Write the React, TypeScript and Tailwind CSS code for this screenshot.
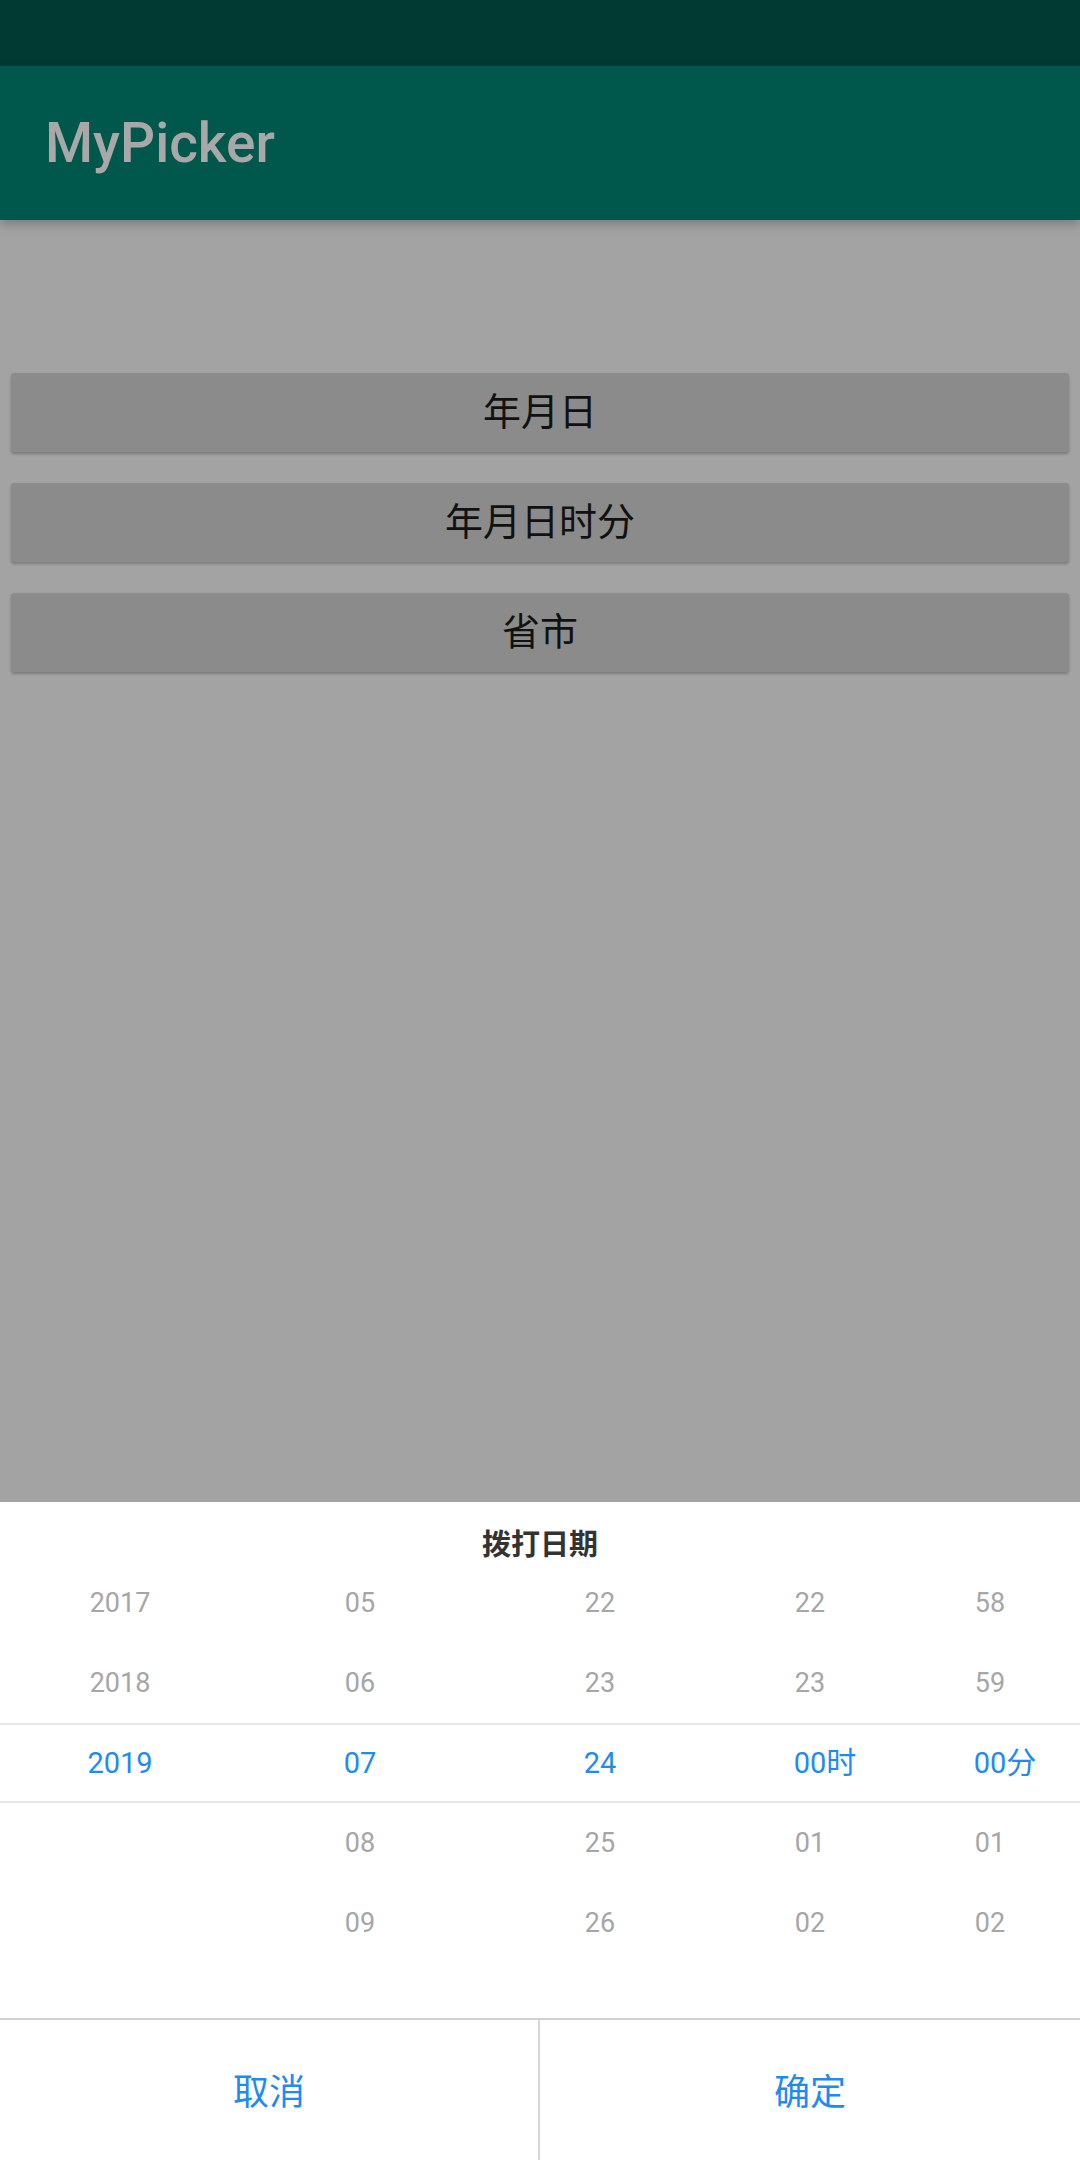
import React from "react";

const font = "font-['Roboto','Noto_Sans_CJK_SC',sans-serif]";

type Col = { w: string; items: string[]; label?: string };

const cols: Col[] = [
  { w: "w-[240px]", items: ["2017", "2018", "2019", "", ""] },
  { w: "w-[240px]", items: ["05", "06", "07", "08", "09"] },
  { w: "w-[240px]", items: ["22", "23", "24", "25", "26"] },
  { w: "w-[180px]", items: ["22", "23", "00", "01", "02"], label: "时" },
  { w: "w-[180px]", items: ["58", "59", "00", "01", "02"], label: "分" },
];

function PickerColumn({ col }: { col: Col }) {
  return (
    <div className={`${col.w} flex flex-col`}>
      {col.items.map((it, i) =>
        i === 2 ? (
          <div
            key={i}
            className="h-[80px] border-y-2 border-[#e6e6e6] flex items-center justify-center"
          >
            <span className="relative text-[29px] leading-none text-[#1f8af0]">
              {it}
              {col.label && (
                <span className="absolute left-full top-1/2 -translate-y-1/2 text-[30px] leading-none">
                  {col.label}
                </span>
              )}
            </span>
          </div>
        ) : (
          <div
            key={i}
            className="h-[80px] flex items-center justify-center text-[27px] leading-none text-[#a6a6a6]"
          >
            {it}
          </div>
        )
      )}
    </div>
  );
}

export default function App() {
  return (
    <div className={`${font} w-[1080px] h-[2160px] flex flex-col bg-[#a3a3a3] overflow-hidden`}>
      <div className="h-[66px] bg-[#003a33] shrink-0" />
      <div className="h-[154px] bg-[#00574b] shrink-0 flex items-center pl-[45px] shadow-[0_4px_10px_rgba(0,0,0,0.25)] relative z-10">
        <span className="text-[55px] font-medium text-[#a8a8a8] leading-none">MyPicker</span>
      </div>
      <div className="flex-1 flex flex-col gap-[31px] px-[11px] pt-[153px]">
        {["年月日", "年月日时分", "省市"].map((t) => (
          <div
            key={t}
            className="h-[79px] rounded-[3px] bg-[#8a8b8a] shadow-[0_2px_3px_rgba(0,0,0,0.25)] flex items-center justify-center text-[38px] text-[#111111]"
          >
            {t}
          </div>
        ))}
      </div>
      <div className="h-[658px] bg-white shrink-0 flex flex-col">
        <div className="h-[61px] pt-[25px] text-center text-[29px] font-bold leading-[36px] text-[#333333]">
          拨打日期
        </div>
        <div className="h-[455px] flex">
          {cols.map((c, i) => (
            <PickerColumn key={i} col={c} />
          ))}
        </div>
        <div className="flex-1 flex border-t-2 border-[#d0d0d0]">
          <div className="w-[540px] flex items-center justify-center pt-[6px] text-[36px] text-[#1f8af0] border-r-2 border-[#d6d6d6]">
            取消
          </div>
          <div className="flex-1 flex items-center justify-center pt-[6px] text-[36px] text-[#1f8af0]">
            确定
          </div>
        </div>
      </div>
    </div>
  );
}
